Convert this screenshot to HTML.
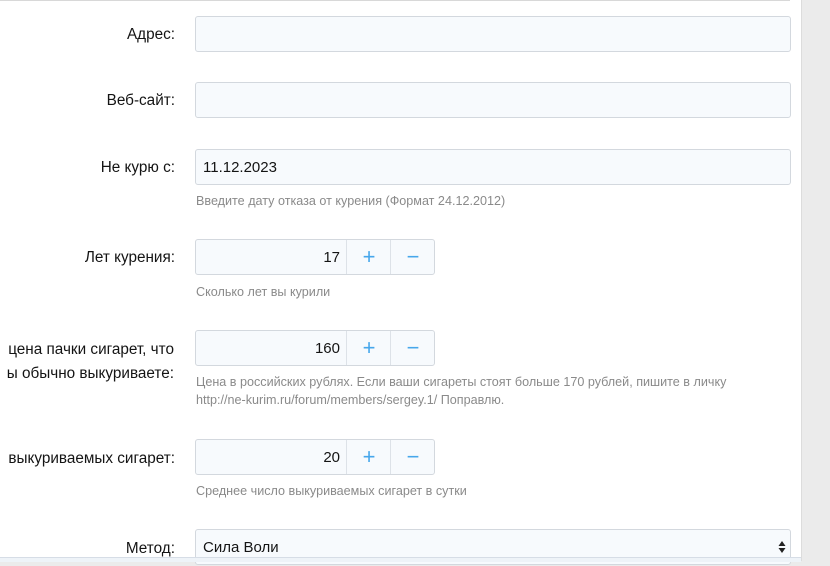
<html><head><style>
body{margin:0;width:830px;height:561px;overflow:hidden;background:#ebebeb;font-family:"Liberation Sans",sans-serif;position:relative}
.panel{position:absolute;left:0;top:0;width:801px;height:561px;background:#fff;border-right:1px solid #dcdcdc}
.top{position:absolute;left:0;top:0;width:790px;height:1px;background:#d8d8d8}
.lbl{position:absolute;right:655px;font-size:15.3px;color:#141414;text-align:right;white-space:nowrap;line-height:22px}
.in{position:absolute;left:195px;height:34px;border:1px solid #d3d8de;border-radius:3px;background:#f7fafd;font-size:15px;color:#141414;line-height:36px;padding-left:7px;width:587px}
.hint{position:absolute;left:196px;font-size:12.6px;color:#8a8a8a;line-height:18px}
.num{position:absolute;left:195px;width:238px;height:34px;border:1px solid #d3d8de;border-radius:3px;background:#f7fafd;font-size:15px}
.num .v{position:absolute;left:0;width:144px;text-align:right;line-height:36px;color:#141414}
.num .p,.num .m{position:absolute;top:0;height:34px;width:44px;border-left:1px solid #dde2e8;color:#47a7eb;text-align:center;line-height:33px;font-size:22px}
.num .p{left:150px}.num .m{left:194px}
</style></head><body>
<div class="panel"></div><div class="top"></div>
<div class="lbl" style="top:24px">Адрес:</div>
<div class="in" style="top:16px"></div>
<div class="lbl" style="top:90px">Веб-сайт:</div>
<div class="in" style="top:82px"></div>
<div class="lbl" style="top:157px">Не курю с:</div>
<div class="in" style="top:149px">11.12.2023</div>
<div class="hint" style="top:192px">Введите дату отказа от курения (Формат 24.12.2012)</div>
<div class="lbl" style="top:247px">Лет курения:</div>
<div class="num" style="top:239px"><div class="v">17</div><div class="p">+</div><div class="m">−</div></div>
<div class="hint" style="top:283px">Сколько лет вы курили</div>
<div class="lbl" style="top:338px;line-height:24px;right:656px">цена пачки сигарет, что<br>ы обычно выкуриваете:</div>
<div class="num" style="top:330px"><div class="v">160</div><div class="p">+</div><div class="m">−</div></div>
<div class="hint" style="top:373px">Цена в российских рублях. Если ваши сигареты стоят больше 170 рублей, пишите в личку<br>http://ne-kurim.ru/forum/members/sergey.1/ Поправлю.</div>
<div class="lbl" style="top:448px">выкуриваемых сигарет:</div>
<div class="num" style="top:439px"><div class="v">20</div><div class="p">+</div><div class="m">−</div></div>
<div class="hint" style="top:482px">Среднее число выкуриваемых сигарет в сутки</div>
<div class="lbl" style="top:538px">Метод:</div>
<div class="in" style="top:529px;height:34px">Сила Воли<svg style="position:absolute;right:4px;top:10px" width="8" height="14" viewBox="0 0 8 14"><path d="M4 1L7.5 6H0.5Z M4 13L7.5 8H0.5Z" fill="#222"/></svg></div>
<div style="position:absolute;left:0;top:557px;width:801px;height:4px;background:#eef3f8;border-top:1px solid #d6dde6"></div>
</body></html>
